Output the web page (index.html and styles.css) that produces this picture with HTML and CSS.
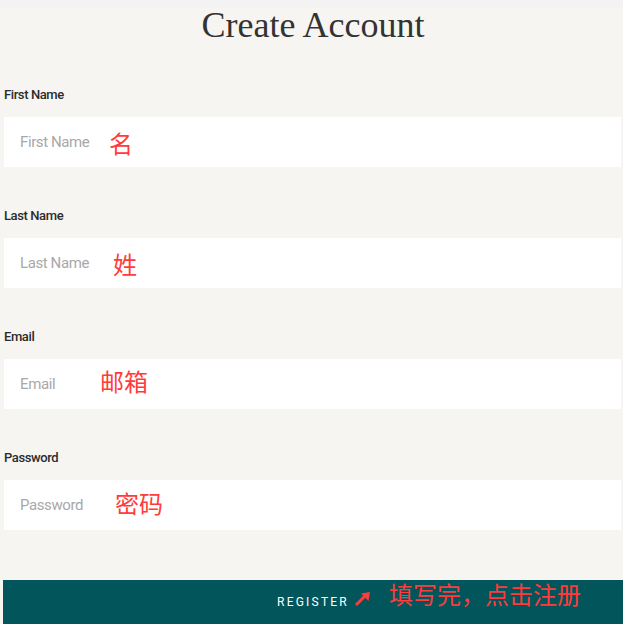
FILE: index.html
```html
<!DOCTYPE html>
<html>
  <head>
    <title>Create Account</title>
    <meta charset="UTF-8">
    <link rel="stylesheet" href="styles.css">
  </head>
  <body>
    <div class="topbar"></div>
    <div class="register-form">
      <h1 class="title">Create Account</h1>

      <div class="field">
        <label class="field-label" for="first">First Name</label>
        <div class="field-box">
          <input class="field-input" id="first" type="text" placeholder="First Name">
          <span class="note note-first">名</span>
        </div>
      </div>

      <div class="field">
        <label class="field-label" for="last">Last Name</label>
        <div class="field-box">
          <input class="field-input" id="last" type="text" placeholder="Last Name">
          <span class="note note-last">姓</span>
        </div>
      </div>

      <div class="field">
        <label class="field-label" for="email">Email</label>
        <div class="field-box">
          <input class="field-input" id="email" type="email" placeholder="Email">
          <span class="note note-email">邮箱</span>
        </div>
      </div>

      <div class="field">
        <label class="field-label" for="pass">Password</label>
        <div class="field-box">
          <input class="field-input" id="pass" type="password" placeholder="Password">
          <span class="note note-pass">密码</span>
        </div>
      </div>

      <div class="submit-row">
        <button class="btn-register" type="submit">Register</button>
        <svg class="note-arrow" width="16" height="16" viewBox="0 0 16 16">
          <path d="M1 14 L10 5" stroke="#ff3b3b" stroke-width="3" fill="none"/>
          <polygon points="15,1 13.5,10 6,2.5" fill="#ff3b3b"/>
        </svg>
        <span class="note note-submit">填写完，点击注册</span>
      </div>
    </div>
  </body>
</html>
```

FILE: styles.css
```css
body {
	margin: 0;
	background: #f7f5f1;
	font-family: Roboto, "Liberation Sans", sans-serif;
	overflow: hidden;
}

.topbar {
	height: 8px;
	background: #f3f3f4;
}

.register-form {
	padding-left: 3px;
}

.title {
	margin: 0;
	height: 35px;
	line-height: 35px;
	text-align: center;
	font-family: "Liberation Serif", serif;
	font-weight: normal;
	font-size: 36px;
	color: #333;
}

.field {
	padding-top: 44px;
}

.field + .field {
	padding-top: 41px;
}

.field-label {
	display: block;
	padding-left: 1px;
	height: 16px;
	line-height: 16px;
	font-size: 13px;
	font-weight: 500;
	letter-spacing: -0.4px;
	color: #2b2b2b;
}

.field-box {
	position: relative;
	margin-top: 14px;
	margin-left: 1px;
	margin-right: 2px;
}

.field-input {
	display: block;
	box-sizing: border-box;
	width: 100%;
	height: 50px;
	border: none;
	padding: 0 16px;
	background: #fff;
	font-family: Roboto, sans-serif;
	font-size: 15px;
	letter-spacing: -0.4px;
	color: #333;
	outline: none;
}

.field-input::placeholder {
	color: #a8a8a8;
}

.note {
	position: absolute;
	top: 12px;
	font-family: "Noto Sans CJK SC", sans-serif;
	font-size: 24px;
	line-height: 28px;
	color: #ff3b3b;
}

.note-first { left: 105px; }
.note-last { left: 109px; }
.note-email { left: 96px; top: 8px; }
.note-pass { left: 111px; top: 9px; }

.submit-row {
	position: relative;
	margin-top: 50px;
}

.btn-register {
	display: block;
	width: 100%;
	height: 44px;
	border: none;
	padding: 0;
	background: #02555a;
	color: #fff;
	font-family: Roboto, sans-serif;
	font-size: 12px;
	letter-spacing: 2.2px;
	text-transform: uppercase;
}

.note-arrow {
	position: absolute;
	left: 352px;
	top: 11px;
}

.note-submit {
	position: absolute;
	left: 386px;
	top: 0;
	color: #ff3b3b;
}
```
